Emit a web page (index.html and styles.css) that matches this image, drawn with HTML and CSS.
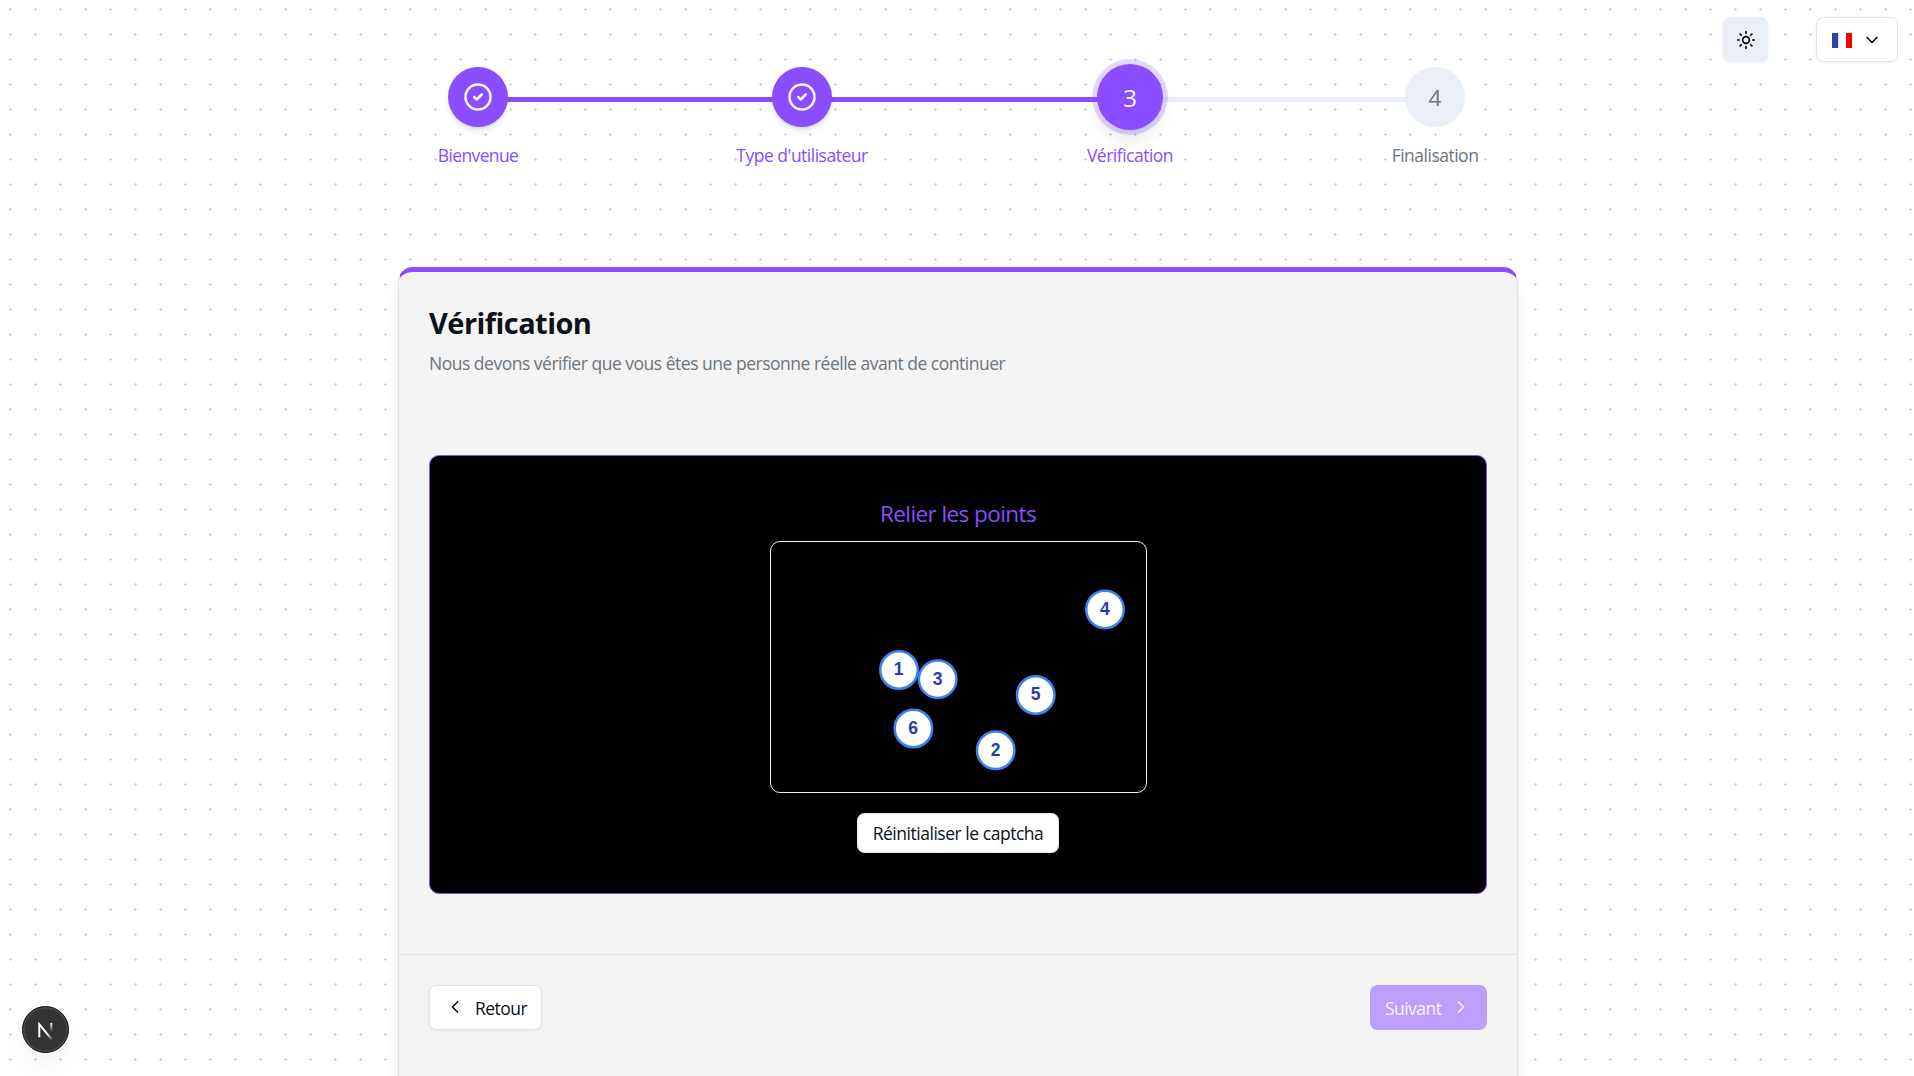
FILE: index.html
```html
<!DOCTYPE html>
<html lang="fr">
<head>
<meta charset="utf-8">
<title>Vérification</title>
<link rel="stylesheet" href="styles.css">
</head>
<body>
<header class="toolbar">
  <button class="theme-toggle" aria-label="Thème">
    <svg class="icon" viewBox="0 0 24 24"><circle cx="12" cy="12" r="4"/><path d="M12 2v2M12 20v2M4.93 4.93l1.41 1.41M17.66 17.66l1.41 1.41M2 12h2M20 12h2M6.34 17.66l-1.41 1.41M19.07 4.93l-1.41 1.41"/></svg>
  </button>
  <button class="lang-select" aria-label="Langue">
    <span class="flag"></span>
    <svg class="icon" viewBox="0 0 24 24"><path d="m6 9 6 6 6-6"/></svg>
  </button>
</header>

<nav class="stepper">
  <div class="step step-1 done">
    <div class="bubble"><svg class="check" viewBox="0 0 24 24"><circle cx="12" cy="12" r="10"/><path d="m9 12 2 2 4-4"/></svg></div>
    <span class="label">Bienvenue</span>
  </div>
  <div class="line filled"></div>
  <div class="step step-2 done">
    <div class="bubble"><svg class="check" viewBox="0 0 24 24"><circle cx="12" cy="12" r="10"/><path d="m9 12 2 2 4-4"/></svg></div>
    <span class="label">Type d'utilisateur</span>
  </div>
  <div class="line filled"></div>
  <div class="step step-3 current">
    <div class="bubble">3</div>
    <span class="label">Vérification</span>
  </div>
  <div class="line"></div>
  <div class="step step-4">
    <div class="bubble">4</div>
    <span class="label">Finalisation</span>
  </div>
</nav>

<main class="card">
  <div class="card-header">
    <h1>Vérification</h1>
    <p>Nous devons vérifier que vous êtes une personne réelle avant de continuer</p>
  </div>
  <section class="captcha">
    <h2>Relier les points</h2>
    <svg class="board" viewBox="0 0 375 250">
      <g class="dots">
        <circle cx="128" cy="128" r="18.75"/>
        <circle cx="224.7" cy="208.3" r="18.75"/>
        <circle cx="166.7" cy="137.2" r="18.75"/>
        <circle cx="334" cy="67.4" r="18.75"/>
        <circle cx="264.7" cy="153" r="18.75"/>
        <circle cx="142.4" cy="186.5" r="18.75"/>
      </g>
      <g class="nums">
        <text x="127.7" y="133.4">1</text>
        <text x="224.5" y="213.7">2</text>
        <text x="166.5" y="142.6">3</text>
        <text x="333.8" y="72.8">4</text>
        <text x="264.5" y="158.4">5</text>
        <text x="142.2" y="191.9">6</text>
      </g>
    </svg>
    <button class="reset"><span>Réinitialiser le captcha</span></button>
  </section>
  <footer class="card-footer">
    <button class="back"><svg class="icon" viewBox="0 0 24 24"><path d="m15 18-6-6 6-6"/></svg><span>Retour</span></button>
    <button class="next" disabled><span>Suivant</span><svg class="icon" viewBox="0 0 24 24"><path d="m9 18 6-6-6-6"/></svg></button>
  </footer>
</main>

<div class="dev-badge">
  <svg viewBox="0 0 47 47">
    <defs>
      <linearGradient id="diag" x1="26" y1="27" x2="31" y2="34" gradientUnits="userSpaceOnUse"><stop stop-color="#fff"/><stop offset="1" stop-color="#fff" stop-opacity="0"/></linearGradient>
      <linearGradient id="stem" x1="29" y1="17" x2="29" y2="26" gradientUnits="userSpaceOnUse"><stop stop-color="#fff"/><stop offset="1" stop-color="#fff" stop-opacity="0"/></linearGradient>
    </defs>
    <path d="M17.3 31.2V18.2L30.2 34" fill="none" stroke="url(#diag)" stroke-width="2"/>
    <path d="M29.3 17v10" stroke="url(#stem)" stroke-width="2"/>
  </svg>
</div>
</body>
</html>
```

FILE: styles.css
```css
* { box-sizing: border-box; }

html, body { height: 1076px; overflow: hidden; }

body {
  margin: 0;
  position: relative;
  font-family: "Open Sans", "Noto Sans", sans-serif;
  font-size: 17.5px;
  color: #0c111b;
  background-color: #fff;
  background-image: radial-gradient(circle at 10.5px 9.5px, #d2d2d4 1.05px, transparent 1.35px);
  background-size: 25px 25px;
}

h1, h2, p { margin: 0; font-weight: 400; }

button {
  font: inherit;
  color: inherit;
  padding: 0;
  border: 0;
  display: flex;
  align-items: center;
}

span, h1, h2, p { white-space: nowrap; }

.icon {
  width: 20px;
  height: 20px;
  flex: none;
  fill: none;
  stroke: currentColor;
  stroke-width: 2;
  stroke-linecap: round;
  stroke-linejoin: round;
}

.toolbar {
  position: absolute;
  top: 17px;
  right: 16px;
  display: flex;
  gap: 48px;
}

.theme-toggle {
  width: 45px;
  height: 45px;
  justify-content: center;
  border-radius: 7.5px;
  background: #eaeff6;
  color: #000;
  box-shadow: 0 1px 3px rgba(0, 0, 0, .06);
}

.theme-toggle .icon { margin-left: 1px; margin-top: 1px; }

.lang-select {
  width: 82px;
  height: 45px;
  padding: 0 15px;
  gap: 10px;
  border: 1px solid #dfe3ea;
  border-radius: 7.5px;
  background: #fff;
  box-shadow: 0 1px 3px rgba(0, 0, 0, .06);
}

.flag {
  width: 20px;
  height: 15px;
  margin-top: 1px;
  background: linear-gradient(90deg, #2f43a5 0 6px, #d9def0 6px 7px, #f6fcff 7px 14px, #f80000 14px);
}

.stepper {
  width: 1040px;
  margin: 0 auto;
  padding-top: 67px;
  position: relative;
  left: 1px;
  display: flex;
  align-items: flex-start;
}

.step {
  flex: none;
  display: flex;
  flex-direction: column;
  align-items: center;
  color: #6c7580;
}

.step-1 { width: 80px; }
.step-2 { width: 132px; }
.step-3, .step-4 { width: 86px; }

.done, .current { color: #8a4dff; }

.bubble {
  width: 60px;
  height: 60px;
  border-radius: 50%;
  display: flex;
  align-items: center;
  justify-content: center;
  font-size: 22.5px;
  background: #eaeff6;
}

.done .bubble {
  background: #8a4dff;
  color: #f5f7fb;
  box-shadow: 0 4px 7px -1px rgba(0, 0, 0, .12), 0 2px 4px -2px rgba(0, 0, 0, .12);
}

.current .bubble {
  width: 66px;
  height: 66px;
  margin: -3px 0;
  font-size: 24.5px;
  background: #8a4dff;
  color: #f5f7fb;
  box-shadow: 0 0 0 5px rgba(138, 77, 255, .22), 0 13px 19px -4px rgba(0, 0, 0, .1), 0 5px 8px -5px rgba(0, 0, 0, .1);
}

.check {
  width: 30px;
  height: 30px;
  fill: none;
  stroke: currentColor;
  stroke-width: 2;
  stroke-linecap: round;
  stroke-linejoin: round;
}

.label {
  margin-top: 16px;
  line-height: 25px;
  letter-spacing: -.5px;
}

.step-1 .label { letter-spacing: -.65px; }

/* Each connector spans the gap between labels plus the overhang on both sides up to the bubbles */
.line {
  position: relative;
  z-index: -1;
  flex: none;
  height: 5px;
  margin-top: 30px;
  background: #eaeff6;
}

.line.filled { background: #8a4dff; }

.step-1 + .line { width: 268px; margin-left: -12px; margin-right: -38px; }
.step-2 + .line { width: 269px; margin-left: -38px; margin-right: -12px; }
.step-3 + .line { width: 244px; margin-left: -11px; margin-right: -14px; }

.card {
  width: 1120px;
  height: 900px;
  margin: 99px auto 0;
  position: relative;
  left: 1px;
  border: 1px solid #dfe3ea;
  border-top: 5px solid #8a4dff;
  border-radius: 15px;
  background: #f4f4f4;
  box-shadow: 0 12px 19px -4px rgba(0, 0, 0, .1), 0 5px 8px -5px rgba(0, 0, 0, .1);
}

.card-header { padding: 31px 30px 0; height: 183px; }

.card-header h1 {
  font-size: 29px;
  font-weight: 700;
  line-height: 39px;
  letter-spacing: -.55px;
}

.card-header p {
  margin-top: 9px;
  line-height: 25px;
  color: #6c7580;
  letter-spacing: -.49px;
}

.captcha {
  height: 439px;
  margin: 0 30px;
  padding-top: 40px;
  border: 1px solid #8a4dff;
  border-radius: 10px;
  background: #000;
  display: flex;
  flex-direction: column;
  align-items: center;
}

.captcha h2 {
  height: 45px;
  line-height: 36px;
  font-size: 22.5px;
  color: #8a4dff;
  letter-spacing: -.58px;
}

.board {
  width: 377px;
  height: 252px;
  border: 1px solid #f0f0f0;
  border-radius: 10px;
}

.dots { fill: #fff; stroke: #3b82f6; stroke-width: 2.5; }

.nums {
  font: 700 17.5px "Liberation Sans", Arial, sans-serif;
  fill: #1e40af;
  text-anchor: middle;
}

.reset {
  width: 202px;
  height: 40px;
  margin-top: 20px;
  justify-content: center;
  border: 1px solid #e2e8f0;
  border-radius: 7.5px;
  background: #fff;
  letter-spacing: -.47px;
}

.card-footer {
  margin-top: 60px;
  padding: 30px 30px 0;
  border-top: 1px solid #dce1e9;
  display: flex;
  justify-content: space-between;
}

.card-footer button { height: 45px; border-radius: 7.5px; letter-spacing: -.55px; }

.card-footer .back {
  width: 113px;
  padding-left: 15px;
  gap: 10px;
  border: 1px solid #dfe3ea;
  background: #fff;
  box-shadow: 0 1px 3px rgba(0, 0, 0, .07);
}

.card-footer .back .icon,
.card-footer .next .icon { margin-top: -2px; }

.card-footer .next {
  width: 117px;
  padding-left: 15px;
  gap: 10px;
  background: #bd9ffb;
  color: #f7f5fc;
}

.dev-badge {
  position: absolute;
  left: 22px;
  top: 1006px;
  width: 47px;
  height: 47px;
  border-radius: 50%;
  background: #333;
  border: 1px solid #111;
  box-shadow: inset 0 0 0 1.5px #4a4a4a, 0 14px 28px -6px rgba(0, 0, 0, .08);
}

.dev-badge svg { display: block; width: 47px; height: 47px; margin: -1px; }
```
